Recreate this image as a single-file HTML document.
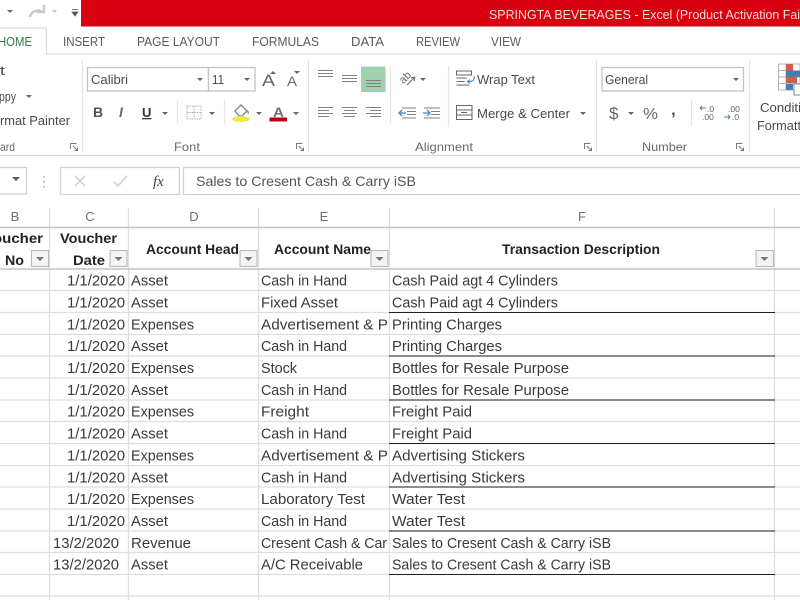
<!DOCTYPE html>
<html><head><meta charset="utf-8"><style>
html,body{margin:0;padding:0;background:#fff;width:800px;height:600px;overflow:hidden}
svg{display:block;font-family:"Liberation Sans",sans-serif;filter:blur(.35px)}
.c{font-size:14.5px;fill:#3a3a3a}
.r{font-size:13px;fill:#4a4a4a}
.h{font-size:14px;font-weight:bold;fill:#222}
.cl{font-size:13px;fill:#707070}
.g{font-size:12px;fill:#6a6a6a}
.gl{stroke:#dedede;stroke-width:1.300;fill:none}
.ic{stroke:#666;stroke-width:1;fill:none}
.a{fill:#666}
</style></head><body>
<svg width="800" height="600" viewBox="0 0 800 600" xmlns="http://www.w3.org/2000/svg">
<rect width="800" height="600" fill="#fff"/>
<!-- Title bar -->
<rect x="81" y="0" width="719" height="26.500" fill="#d9000f"/>
<text x="489" y="19" font-size="13" fill="#f8dcdc" textLength="311" lengthAdjust="spacingAndGlyphs">SPRINGTA BEVERAGES -  Excel (Product Activation Fai</text>
<path class="a" d="M7 10h6l-3 3z"/>
<path d="M30 17c1-6 8-8 13-5M44 5v7h-7" stroke="#c8c8c8" stroke-width="2.400" fill="none"/>
<path d="M52 10h5l-2.500 3z" fill="#c8c8c8"/>
<path d="M72 9.500h6M72 12h6l-3 4z" fill="#555" stroke="#555" stroke-width=".7"/>
<!-- Tabs -->
<path d="M0 28H46.500V54H800" stroke="#dcdcdc" stroke-width="1.300" fill="none"/>
<text x="-2" y="46" font-size="13" fill="#2a7a4a" textLength="34" lengthAdjust="spacingAndGlyphs">HOME</text>
<g font-size="13" fill="#5a5a5a">
<text x="63" y="46" textLength="42" lengthAdjust="spacingAndGlyphs">INSERT</text>
<text x="137" y="46" textLength="83" lengthAdjust="spacingAndGlyphs">PAGE LAYOUT</text>
<text x="252" y="46" textLength="67" lengthAdjust="spacingAndGlyphs">FORMULAS</text>
<text x="351" y="46" textLength="33" lengthAdjust="spacingAndGlyphs">DATA</text>
<text x="416" y="46" textLength="44" lengthAdjust="spacingAndGlyphs">REVIEW</text>
<text x="491" y="46" textLength="30" lengthAdjust="spacingAndGlyphs">VIEW</text>
</g>
<!-- Ribbon dividers -->
<g stroke="#e4e4e4" stroke-width="1.200">
<path d="M82.500 60V152M308.500 60V152M596.500 60V152M749.500 60V152"/>
<path d="M177.500 100V124M224.500 100V124M390.500 68V124M448.500 66V127M691.500 100V126"/>
</g>
<path d="M0 155.500H800" stroke="#dcdcdc" stroke-width="1.300"/>
<!-- Clipboard -->
<g class="r">
<text x="0" y="75" textLength="5" lengthAdjust="spacingAndGlyphs">t</text>
<text x="-1" y="101" textLength="17" lengthAdjust="spacingAndGlyphs">ppy</text>
<text x="0" y="125" textLength="70" lengthAdjust="spacingAndGlyphs">rmat Painter</text>
</g>
<path class="a" d="M26 95h6l-3 3z"/>
<text x="0" y="151" class="g" textLength="15" lengthAdjust="spacingAndGlyphs">ard</text>
<g id="launch" stroke="#777" fill="none" stroke-width="1"><path d="M70.500 149v-5.500h6M73 146l4 4M77.500 147.500v3h-3"/></g>
<!-- Font -->
<rect x="87.500" y="67.500" width="121" height="23.500" fill="#fff" stroke="#c2c2c2" stroke-width="1.300"/>
<rect x="208.500" y="67.500" width="46.500" height="23.500" fill="#fff" stroke="#c2c2c2" stroke-width="1.300"/>
<text x="91" y="84" class="r" textLength="37" lengthAdjust="spacingAndGlyphs">Calibri</text>
<text x="212" y="84" class="r" textLength="12" lengthAdjust="spacingAndGlyphs">11</text>
<path class="a" d="M197 78h6l-3 3zM244 78h6l-3 3z"/>
<text x="262" y="86" font-size="17" fill="#666" textLength="13" lengthAdjust="spacingAndGlyphs">A</text>
<path class="a" d="M270 74h6l-3-3z"/>
<text x="287" y="86" font-size="14" fill="#666" textLength="10" lengthAdjust="spacingAndGlyphs">A</text>
<path class="a" d="M294 71h6l-3 3z"/>
<text x="93" y="117" font-size="14" font-weight="bold" fill="#555">B</text>
<text x="119" y="117" font-size="14" font-weight="bold" font-style="italic" fill="#666">I</text>
<text x="142" y="117" font-size="13" font-weight="bold" fill="#333" text-decoration="underline">U</text>
<path class="a" d="M162 112h6l-3 3zM209 112h6l-3 3zM256 112h6l-3 3zM293 112h6l-3 3z"/>
<path d="M187 106h14v13h-14zM187 112.500h14M194 106v13" stroke="#b0b0b0" stroke-width="1" stroke-dasharray="1.500 1" fill="none"/>
<path d="M235 111l6-6 6 6-5 5h-3z" fill="#fff" stroke="#777" stroke-width="1.200"/>
<path d="M247 110l2 2-1 3z" fill="#777"/>
<ellipse cx="241" cy="119" rx="9" ry="3" fill="#e9ea50"/>
<text x="273" y="117" font-size="14" font-weight="bold" fill="#707070" textLength="11" lengthAdjust="spacingAndGlyphs">A</text>
<rect x="269.500" y="117.500" width="17.500" height="4" fill="#b30018"/>
<text x="174" y="151" class="g" textLength="26" lengthAdjust="spacingAndGlyphs">Font</text>
<use href="#launch" x="226"/>
<!-- Alignment -->
<rect x="361" y="66.500" width="24.500" height="25.500" fill="#9ed2ae"/>
<g stroke="#808080" stroke-width="1">
<path d="M318 70.500h15M318 73.500h15M318 76.500h15"/>
<path d="M342 75.500h15M342 78.500h15M342 81.500h15"/>
<path d="M366 80.500h15M366 83.500h15M366 86.500h15"/>
<path d="M318 107.500h15M318 110.500h11M318 113.500h15M318 116.500h11"/>
<path d="M342 107.500h15M344 110.500h11M342 113.500h15M344 116.500h11"/>
<path d="M366 107.500h15M370 110.500h11M366 113.500h15M370 116.500h11"/>
<path d="M402 108h14M407 111.500h9M407 114.500h9M402 118h14"/>
<path d="M424 108h16M431 111.500h9M431 114.500h9M424 118h16"/>
</g>
<path d="M399 113h7M402 110l-3 3 3 3M423 113h7M427 110l3 3-3 3" stroke="#4a86b8" stroke-width="1.300" fill="none"/>
<text x="399" y="82" font-size="11" fill="#666" transform="rotate(-45 404 78)">ab</text>
<path d="M407 85l8-8M415 77l-4 1M415 77l-1 4" stroke="#777" stroke-width="1.200" fill="none"/>
<path class="a" d="M420 78h6l-3 3z"/>
<path class="ic" d="M456.500 71h15v4h-15zM456.500 78h10M456.500 81.500h8M456.500 85h13"/>
<path d="M474 76c1 4-2 6-6 5.500M470 79.500l-2.500 2 2.500 2" stroke="#4a86b8" stroke-width="1.100" fill="none"/>
<text x="477" y="84" class="r" textLength="58" lengthAdjust="spacingAndGlyphs">Wrap Text</text>
<path class="ic" d="M456.500 105.500h15.500v14h-15.500zM456.500 110h15.500M456.500 115h15.500M461 112.500h6"/>
<text x="477" y="118" class="r" textLength="93" lengthAdjust="spacingAndGlyphs">Merge &amp; Center</text>
<path class="a" d="M580 112h6l-3 3z"/>
<text x="415" y="151" class="g" textLength="58" lengthAdjust="spacingAndGlyphs">Alignment</text>
<use href="#launch" x="514"/>
<!-- Number -->
<rect x="602" y="67.500" width="141.500" height="23.500" fill="#fff" stroke="#c2c2c2" stroke-width="1.300"/>
<text x="605" y="84" class="r" textLength="43" lengthAdjust="spacingAndGlyphs">General</text>
<path class="a" d="M733 78h6l-3 3z"/>
<text x="609" y="119" font-size="17" fill="#666">$</text>
<path class="a" d="M628 112h6l-3 3z"/>
<text x="643" y="119" font-size="16" fill="#666" textLength="15" lengthAdjust="spacingAndGlyphs">%</text>
<text x="671" y="115" font-size="17" font-weight="bold" fill="#555">,</text>
<g font-size="8.500" fill="#666">
<text x="707" y="112">.0</text><text x="702" y="120">.00</text>
<text x="728" y="112">.00</text><text x="732" y="120">.0</text>
</g>
<path d="M700 108h6M702 106l-2 2 2 2M724 117h6M728 115l2 2-2 2" stroke="#4a86b8" stroke-width="1" fill="none"/>
<text x="642" y="151" class="g" textLength="45" lengthAdjust="spacingAndGlyphs">Number</text>
<use href="#launch" x="666"/>
<!-- Conditional formatting -->
<rect x="778.500" y="64" width="21.500" height="26" fill="#fff" stroke="#b5b5b5"/>
<path d="M778 70.500h22M778 77h22M778 83.500h22M786 64v26" stroke="#b5b5b5"/>
<rect x="786" y="64" width="7" height="7" fill="#c86050"/><rect x="786" y="71" width="14" height="6" fill="#4a7cb0"/><rect x="786" y="77" width="11" height="6" fill="#c86050"/><rect x="786" y="84" width="7" height="6" fill="#4a7cb0"/>
<rect x="794" y="84" width="8" height="11" fill="#fff" stroke="#888"/>
<text x="760" y="112" class="r" textLength="41" lengthAdjust="spacingAndGlyphs">Conditi</text>
<text x="757" y="130" class="r" textLength="44" lengthAdjust="spacingAndGlyphs">Formatt</text>
<!-- Formula bar -->
<path d="M-2 167.500H26.500V194H-2" fill="#fff" stroke="#d0d0d0" stroke-width="1.200"/>
<path d="M12 177h8l-4 4z" fill="#555"/>
<path d="M44 176v1.500M44 181v1.500M44 186v1.500" stroke="#a0a0a0" stroke-width="1.500"/>
<rect x="60.500" y="167.500" width="119" height="27" fill="#fff" stroke="#d0d0d0" stroke-width="1.200"/>
<path d="M75 176l10 10M85 176l-10 10" stroke="#d4d4d4" stroke-width="1.800"/>
<path d="M114 182l4 4 9-10" stroke="#d4d4d4" stroke-width="1.800" fill="none"/>
<text x="153" y="186" font-family="Liberation Serif" font-style="italic" font-size="15" fill="#444">fx</text>
<path d="M183.500 194.500V167.500H800M183 194.500H800" fill="none" stroke="#d0d0d0" stroke-width="1.200"/>
<text x="196" y="186" font-size="14" fill="#555" textLength="220" lengthAdjust="spacingAndGlyphs">Sales to Cresent Cash &amp; Carry iSB</text>
<!-- Grid -->
<g class="gl">
<path d="M0 290.500H800M0 312.500H800M0 334.500H800M0 356H800M0 378H800M0 400H800M0 421.500H800M0 443.500H800M0 465.500H800M0 487H800M0 509H800M0 531H800M0 552.500H800M0 574.500H800M0 596H800"/>
<path d="M49.500 208V600M128.500 208V600M258.500 208V600M389.500 208V600M774.500 208V600"/>
</g>
<path d="M0 227.500H800M0 269H800" stroke="#c4c4c4" stroke-width="1.400"/>
<g stroke="#222" stroke-width="1.100">
<path d="M389 312.500H775M389 356H775M389 400H775M389 443.500H775M389 487H775M389 531H775M389 574.500H775"/>
</g>
<g class="cl" text-anchor="middle"><text x="15" y="221">B</text><text x="90" y="221">C</text><text x="194" y="221">D</text><text x="324" y="221">E</text><text x="582" y="221">F</text></g>
<!-- Header -->
<g class="h">
<text x="-7" y="243" textLength="50" lengthAdjust="spacingAndGlyphs">oucher</text>
<text x="5" y="265" textLength="19" lengthAdjust="spacingAndGlyphs">No</text>
<text x="60" y="243" textLength="57" lengthAdjust="spacingAndGlyphs">Voucher</text>
<text x="73" y="265" textLength="32" lengthAdjust="spacingAndGlyphs">Date</text>
<text x="146" y="254" textLength="93" lengthAdjust="spacingAndGlyphs">Account Head</text>
<text x="274" y="254" textLength="97" lengthAdjust="spacingAndGlyphs">Account Name</text>
<text x="502" y="254" textLength="158" lengthAdjust="spacingAndGlyphs">Transaction Description</text>
</g>
<g fill="#f4f4f4" stroke="#b8b8b8" stroke-width="1.100">
<rect x="31.500" y="250.500" width="17" height="16"/><rect x="110" y="250.500" width="17" height="16"/><rect x="240" y="250.500" width="17" height="16"/><rect x="371" y="250.500" width="17" height="16"/><rect x="756" y="250.500" width="17.500" height="16"/>
</g>
<path fill="#777" d="M36 257h8l-4 4zM114.500 257h8l-4 4zM244.500 257h8l-4 4zM375.500 257h8l-4 4zM760.500 257h8l-4 4z"/>
<!-- Data -->
<g class="c">
<text x="67" y="285.500" textLength="58" lengthAdjust="spacingAndGlyphs">1/1/2020</text>
<text x="67" y="307.500" textLength="58" lengthAdjust="spacingAndGlyphs">1/1/2020</text>
<text x="67" y="329.300" textLength="58" lengthAdjust="spacingAndGlyphs">1/1/2020</text>
<text x="67" y="351.200" textLength="58" lengthAdjust="spacingAndGlyphs">1/1/2020</text>
<text x="67" y="373" textLength="58" lengthAdjust="spacingAndGlyphs">1/1/2020</text>
<text x="67" y="394.900" textLength="58" lengthAdjust="spacingAndGlyphs">1/1/2020</text>
<text x="67" y="416.700" textLength="58" lengthAdjust="spacingAndGlyphs">1/1/2020</text>
<text x="67" y="438.600" textLength="58" lengthAdjust="spacingAndGlyphs">1/1/2020</text>
<text x="67" y="460.400" textLength="58" lengthAdjust="spacingAndGlyphs">1/1/2020</text>
<text x="67" y="482.300" textLength="58" lengthAdjust="spacingAndGlyphs">1/1/2020</text>
<text x="67" y="504.100" textLength="58" lengthAdjust="spacingAndGlyphs">1/1/2020</text>
<text x="67" y="526" textLength="58" lengthAdjust="spacingAndGlyphs">1/1/2020</text>
<text x="53" y="547.800" textLength="66" lengthAdjust="spacingAndGlyphs">13/2/2020</text>
<text x="53" y="569.700" textLength="66" lengthAdjust="spacingAndGlyphs">13/2/2020</text>
<text x="131" y="285.500" textLength="37" lengthAdjust="spacingAndGlyphs">Asset</text>
<text x="131" y="307.500" textLength="37" lengthAdjust="spacingAndGlyphs">Asset</text>
<text x="131" y="329.300" textLength="63" lengthAdjust="spacingAndGlyphs">Expenses</text>
<text x="131" y="351.200" textLength="37" lengthAdjust="spacingAndGlyphs">Asset</text>
<text x="131" y="373" textLength="63" lengthAdjust="spacingAndGlyphs">Expenses</text>
<text x="131" y="394.900" textLength="37" lengthAdjust="spacingAndGlyphs">Asset</text>
<text x="131" y="416.700" textLength="63" lengthAdjust="spacingAndGlyphs">Expenses</text>
<text x="131" y="438.600" textLength="37" lengthAdjust="spacingAndGlyphs">Asset</text>
<text x="131" y="460.400" textLength="63" lengthAdjust="spacingAndGlyphs">Expenses</text>
<text x="131" y="482.300" textLength="37" lengthAdjust="spacingAndGlyphs">Asset</text>
<text x="131" y="504.100" textLength="63" lengthAdjust="spacingAndGlyphs">Expenses</text>
<text x="131" y="526" textLength="37" lengthAdjust="spacingAndGlyphs">Asset</text>
<text x="131" y="547.800" textLength="60" lengthAdjust="spacingAndGlyphs">Revenue</text>
<text x="131" y="569.700" textLength="37" lengthAdjust="spacingAndGlyphs">Asset</text>
<text x="261" y="285.500" textLength="86" lengthAdjust="spacingAndGlyphs">Cash in Hand</text>
<text x="261" y="307.500" textLength="77" lengthAdjust="spacingAndGlyphs">Fixed Asset</text>
<text x="261" y="329.300" textLength="127" lengthAdjust="spacingAndGlyphs">Advertisement &amp; P</text>
<text x="261" y="351.200" textLength="86" lengthAdjust="spacingAndGlyphs">Cash in Hand</text>
<text x="261" y="373" textLength="36" lengthAdjust="spacingAndGlyphs">Stock</text>
<text x="261" y="394.900" textLength="86" lengthAdjust="spacingAndGlyphs">Cash in Hand</text>
<text x="261" y="416.700" textLength="48" lengthAdjust="spacingAndGlyphs">Freight</text>
<text x="261" y="438.600" textLength="86" lengthAdjust="spacingAndGlyphs">Cash in Hand</text>
<text x="261" y="460.400" textLength="127" lengthAdjust="spacingAndGlyphs">Advertisement &amp; P</text>
<text x="261" y="482.300" textLength="86" lengthAdjust="spacingAndGlyphs">Cash in Hand</text>
<text x="261" y="504.100" textLength="104" lengthAdjust="spacingAndGlyphs">Laboratory Test</text>
<text x="261" y="526" textLength="86" lengthAdjust="spacingAndGlyphs">Cash in Hand</text>
<text x="261" y="547.800" textLength="126" lengthAdjust="spacingAndGlyphs">Cresent Cash &amp; Car</text>
<text x="261" y="569.700" textLength="102" lengthAdjust="spacingAndGlyphs">A/C Receivable</text>
<text x="392" y="285.500" textLength="166" lengthAdjust="spacingAndGlyphs">Cash Paid agt 4 Cylinders</text>
<text x="392" y="307.500" textLength="166" lengthAdjust="spacingAndGlyphs">Cash Paid agt 4 Cylinders</text>
<text x="392" y="329.300" textLength="110" lengthAdjust="spacingAndGlyphs">Printing Charges</text>
<text x="392" y="351.200" textLength="110" lengthAdjust="spacingAndGlyphs">Printing Charges</text>
<text x="392" y="373" textLength="177" lengthAdjust="spacingAndGlyphs">Bottles for Resale Purpose</text>
<text x="392" y="394.900" textLength="177" lengthAdjust="spacingAndGlyphs">Bottles for Resale Purpose</text>
<text x="392" y="416.700" textLength="80" lengthAdjust="spacingAndGlyphs">Freight Paid</text>
<text x="392" y="438.600" textLength="80" lengthAdjust="spacingAndGlyphs">Freight Paid</text>
<text x="392" y="460.400" textLength="133" lengthAdjust="spacingAndGlyphs">Advertising Stickers</text>
<text x="392" y="482.300" textLength="133" lengthAdjust="spacingAndGlyphs">Advertising Stickers</text>
<text x="392" y="504.100" textLength="73" lengthAdjust="spacingAndGlyphs">Water Test</text>
<text x="392" y="526" textLength="73" lengthAdjust="spacingAndGlyphs">Water Test</text>
<text x="392" y="547.800" textLength="219" lengthAdjust="spacingAndGlyphs">Sales to Cresent Cash &amp; Carry iSB</text>
<text x="392" y="569.700" textLength="219" lengthAdjust="spacingAndGlyphs">Sales to Cresent Cash &amp; Carry iSB</text>
</g>
</svg>
</body></html>
